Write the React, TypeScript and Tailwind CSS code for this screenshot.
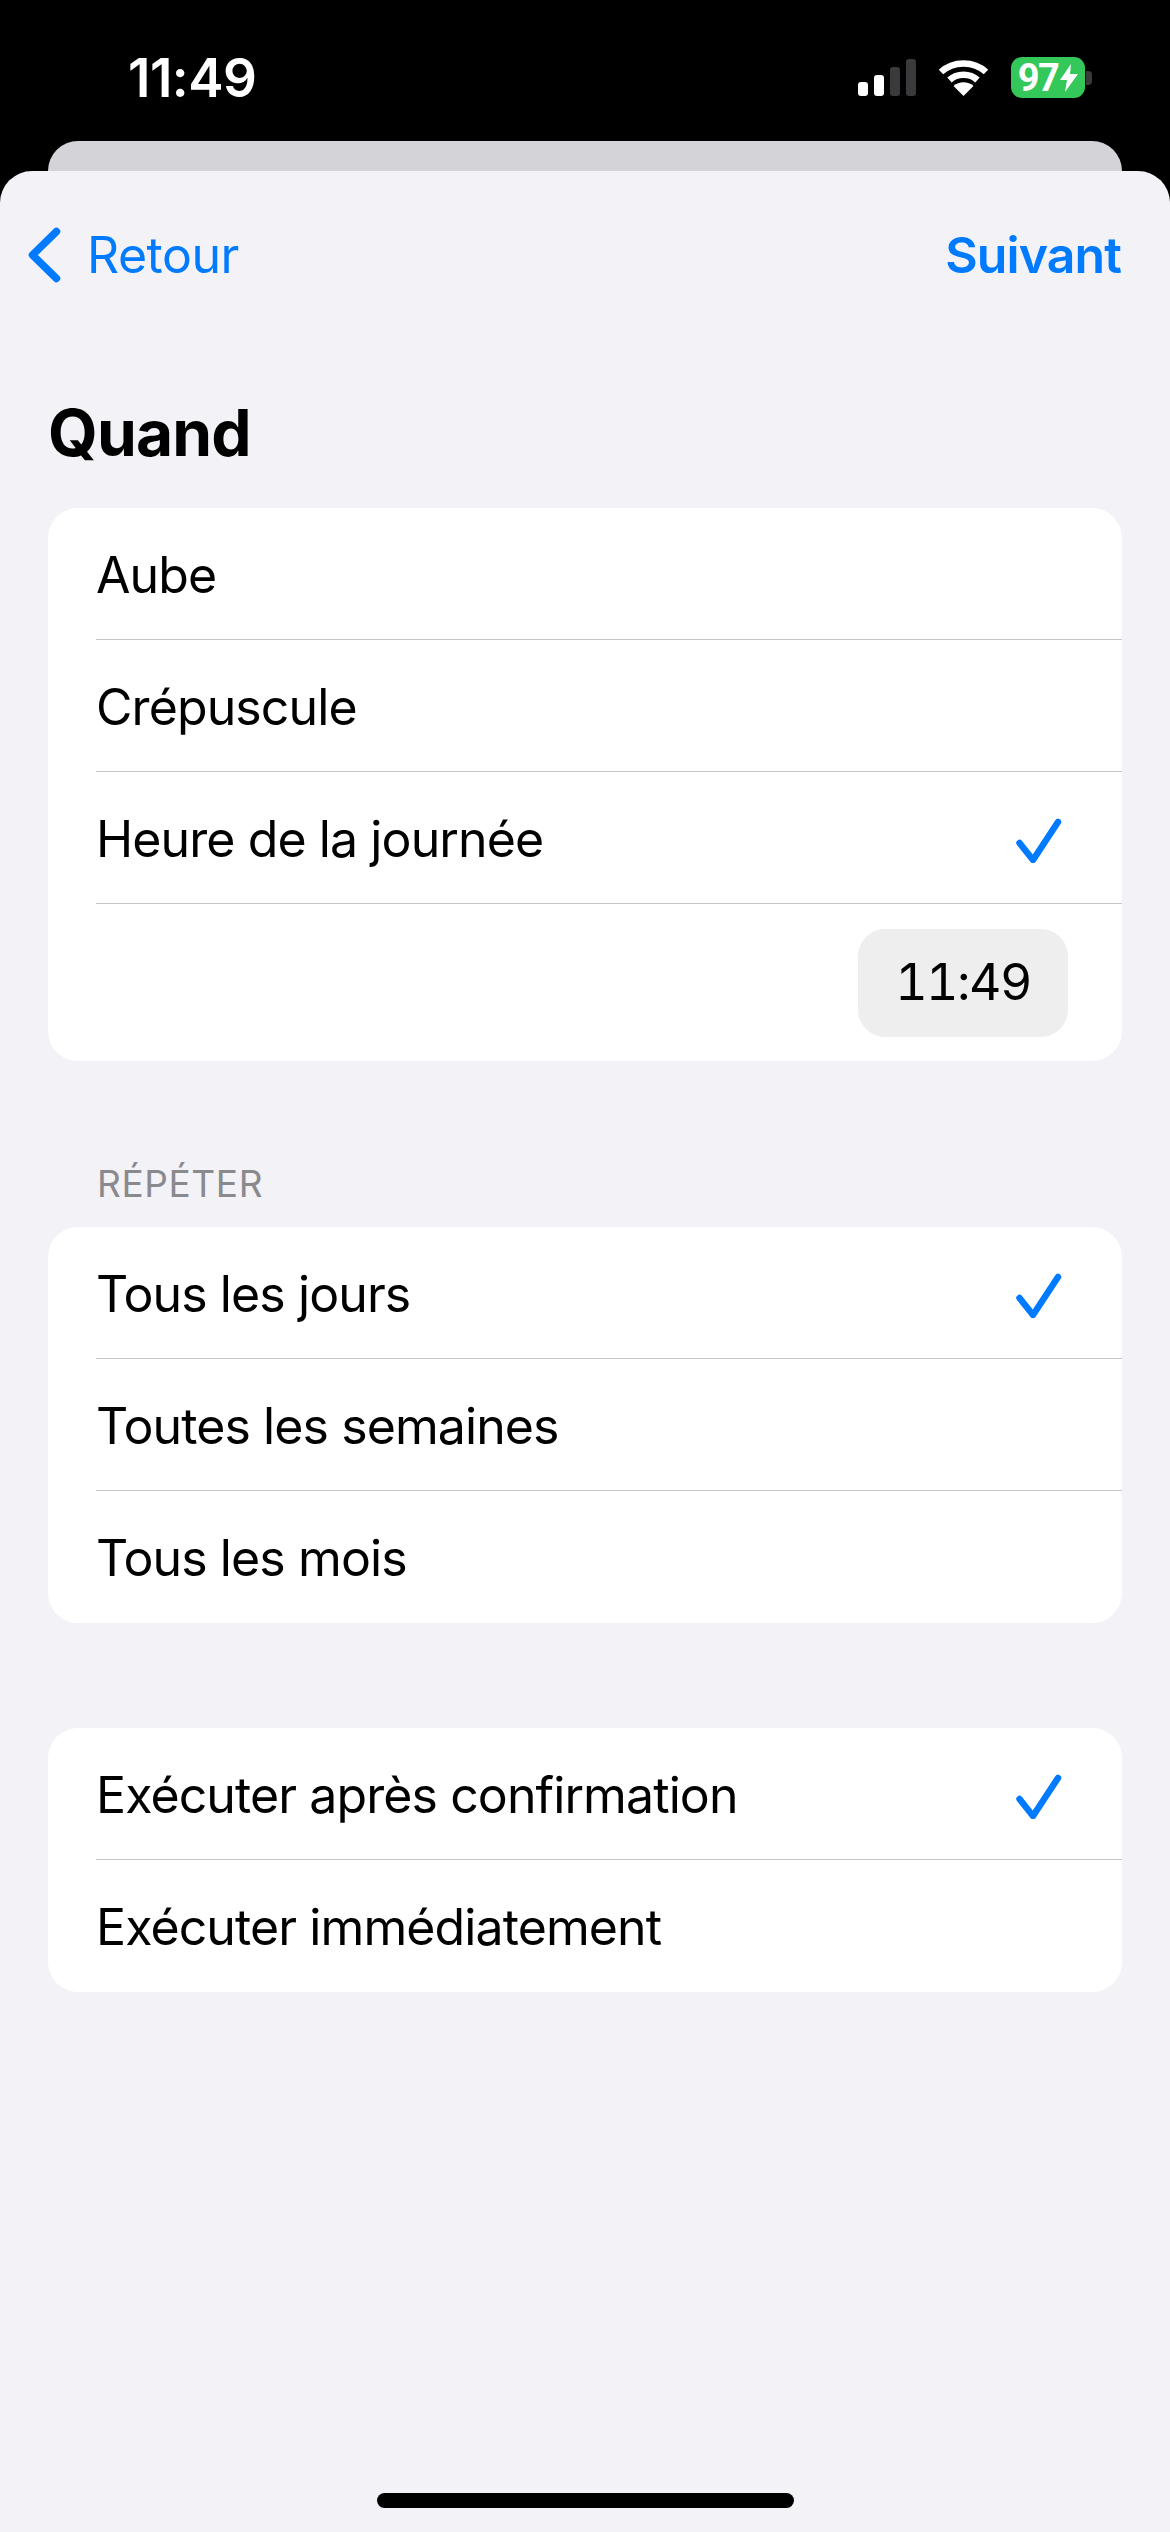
const font = { fontFamily: "Inter, 'Liberation Sans', sans-serif" }

function Check() {
  return (
    <svg width="50" height="50" viewBox="0 0 50 50" fill="none" className="shrink-0">
      <path d="M5.5 30 L19 47 L44 9" stroke="#007aff" strokeWidth="6.5" strokeLinecap="round" strokeLinejoin="round" />
    </svg>
  )
}

function Row({ label, checked, last }: { label: string; checked?: boolean; last?: boolean }) {
  return (
    <div className={`h-[132px] ml-[48px] flex items-center justify-between pr-[58px] ${last ? "" : "border-b border-[#c6c6c8]"}`}>
      <span className="pt-[3px] text-[50px] tracking-[-0.9px] text-black">{label}</span>
      {checked && <Check />}
    </div>
  )
}

function StatusIcons() {
  return (
    <div className="flex items-center gap-[22px] mr-[78px]">
      <div className="flex items-end gap-[6px] h-[37px]">
        <div className="w-[10px] h-[14px] rounded-[3px] bg-white" />
        <div className="w-[10px] h-[21px] rounded-[3px] bg-white" />
        <div className="w-[10px] h-[29px] rounded-[3px] bg-[#3a3a3c]" />
        <div className="w-[10px] h-[37px] rounded-[3px] bg-[#3a3a3c]" />
      </div>
      <svg width="51" height="37" viewBox="0 0 51 37" fill="none">
        <path d="M3 13 C15 1.5 36 1.5 48 13" stroke="white" strokeWidth="6.5" />
        <path d="M11.5 21 C19 14 32 14 39.5 21" stroke="white" strokeWidth="6.5" />
        <path d="M25.5 37 L15.5 27 C21 22 30 22 35.5 27 Z" fill="white" />
      </svg>
      <div className="flex items-center">
        <div className="w-[74px] h-[41px] rounded-[11px] bg-[#34c759] flex items-center justify-center gap-[2px] text-white">
          <span className="font-['Roboto'] text-[38px] font-bold tracking-[-1.5px] leading-none">97</span>
          <svg width="18" height="28" viewBox="0 0 18 28">
            <path d="M11 0 L0 16 H7 L5 28 L18 10 H10 Z" fill="white" />
          </svg>
        </div>
        <div className="w-[6px] h-[14px] rounded-r-[4px] bg-[#3a3a3c] ml-[1px]" />
      </div>
    </div>
  )
}

export default function App() {
  return (
    <div className="w-[1170px] h-[2532px] bg-black flex flex-col overflow-hidden" style={font}>
      <div className="h-[141px] flex items-start justify-between shrink-0">
        <span className="ml-[128px] mt-[48px] text-[53px] leading-[60px] font-semibold tracking-[-0.5px] text-white">11:49</span>
        <div className="mt-[57px]">
          <StatusIcons />
        </div>
      </div>
      <div className="h-[30px] mx-[48px] bg-[#d3d3d8] rounded-t-[32px] shrink-0" />
      <div className="flex-1 bg-[#f2f2f7] rounded-t-[32px] flex flex-col">
        <div className="h-[104px] flex items-center justify-between pl-[28px] pr-[49px] mt-[32px] shrink-0">
          <div className="flex items-center gap-[26px]">
            <svg width="33" height="56" viewBox="0 0 33 56" fill="none">
              <path d="M28.5 4.5 L4.5 28 L28.5 51.5" stroke="#007aff" strokeWidth="7.5" strokeLinecap="round" strokeLinejoin="round" />
            </svg>
            <span className="text-[50px] tracking-[-0.5px] text-[#007aff]">Retour</span>
          </div>
          <span className="text-[50px] font-semibold tracking-[-0.9px] text-[#007aff]">Suivant</span>
        </div>
        <h1 className="ml-[48px] mt-[89px] text-[64px] leading-[74px] font-bold tracking-[-0.8px] text-black">Quand</h1>
        <div className="mx-[48px] mt-[38px] bg-white rounded-[30px]">
          <Row label="Aube" />
          <Row label="Crépuscule" />
          <Row label="Heure de la journée" checked />
          <div className="h-[157px] flex items-center justify-end pr-[54px]">
            <div className="w-[210px] h-[108px] rounded-[27px] bg-[#eeeeef] flex items-center justify-center text-[50px] tabular-nums tracking-[-1.5px] text-black">
              11:49
            </div>
          </div>
        </div>
        <div className="ml-[97px] mt-[99px] mb-[19px] text-[37px] leading-[48px] tracking-[0.6px] text-[#8a8a8e]">RÉPÉTER</div>
        <div className="mx-[48px] bg-white rounded-[30px]">
          <Row label="Tous les jours" checked />
          <Row label="Toutes les semaines" />
          <Row label="Tous les mois" last />
        </div>
        <div className="mx-[48px] mt-[105px] bg-white rounded-[30px]">
          <Row label="Exécuter après confirmation" checked />
          <Row label="Exécuter immédiatement" last />
        </div>
        <div className="mt-auto mb-[24px] ml-[377px] w-[417px] h-[15px] rounded-full bg-black" />
      </div>
    </div>
  )
}
